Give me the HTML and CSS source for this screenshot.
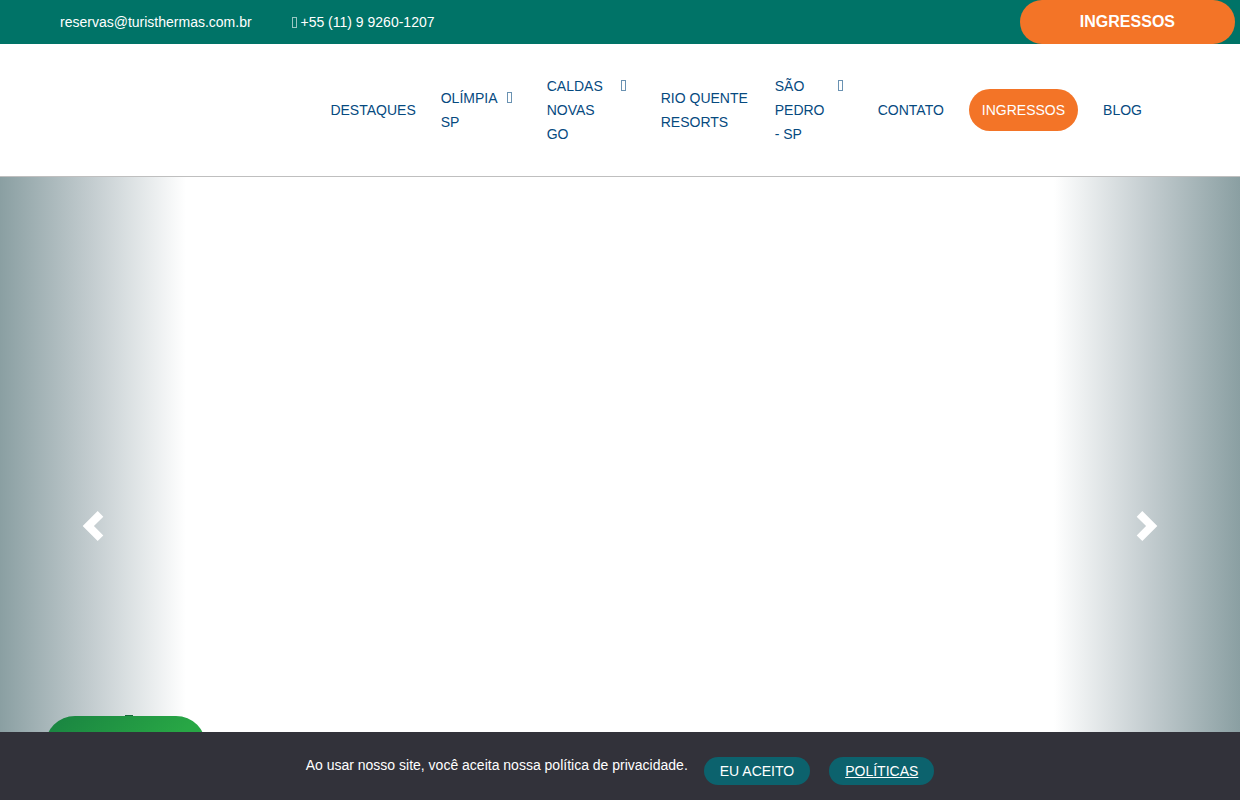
FILE: index.html
```html
<!DOCTYPE html>
<html lang="pt-BR">
<head>
<meta charset="utf-8">
<meta name="viewport" content="width=device-width, initial-scale=1">
<title>Turisthermas</title>
<link rel="stylesheet" href="styles.css">
</head>
<body>
<div class="topbar">
  <div class="topbar-contact">
    <a href="mailto:reservas@turisthermas.com.br">reservas@turisthermas.com.br</a>
    <a href="tel:+5511992601207"><span class="glyph" aria-hidden="true"></span> +55 (11) 9 9260-1207</a>
  </div>
  <a class="topbar-cta" href="#ingressos">INGRESSOS</a>
</div>
<header class="header">
  <nav class="nav">
    <a class="nav-link" href="#destaques">DESTAQUES</a>
    <a class="nav-link" href="#olimpia"><span class="label-olimpia">OLÍMPIA SP</span><span class="glyph caret" aria-hidden="true"></span></a>
    <a class="nav-link" href="#caldas"><span class="label-caldas">CALDAS NOVAS GO</span><span class="glyph caret" aria-hidden="true"></span></a>
    <a class="nav-link" href="#rio"><span class="label-rio">RIO QUENTE RESORTS</span></a>
    <a class="nav-link" href="#sao-pedro"><span class="label-pedro">SÃO PEDRO - SP</span><span class="glyph caret" aria-hidden="true"></span></a>
    <a class="nav-link" href="#contato">CONTATO</a>
    <a class="nav-link nav-pill" href="#ingressos">INGRESSOS</a>
    <a class="nav-link" href="#blog">BLOG</a>
  </nav>
</header>
<main class="carousel">
  <button class="control control-prev" type="button" aria-label="Anterior">
    <svg width="30" height="30" viewBox="0 0 8 8" fill="#fff"><path d="M5.25 0l-4 4 4 4 1.5-1.5L4.25 4l2.5-2.5L5.25 0z"/></svg>
  </button>
  <button class="control control-next" type="button" aria-label="Próximo">
    <svg width="30" height="30" viewBox="0 0 8 8" fill="#fff"><path d="M2.75 0l-1.5 1.5L3.75 4l-2.5 2.5L2.75 8l4-4-4-4z"/></svg>
  </button>
</main>
<a class="chat" href="#whatsapp" aria-label="WhatsApp"><span class="chat-icon" aria-hidden="true"></span></a>
<div class="cookies">
  <p class="cookies-text">Ao usar nosso site, você aceita nossa política de privacidade.</p>
  <button class="cookies-button" type="button">EU ACEITO</button>
  <a class="cookies-button cookies-link" href="#politicas">POLÍTICAS</a>
</div>
</body>
</html>
```
FILE: styles.css
```css
* { box-sizing: border-box; }
body {
  margin: 0;
  background: #fff;
  font-family: "Liberation Sans", Arial, sans-serif;
  font-size: 14px;
  line-height: 24px;
  color: #fff;
}
a { color: inherit; text-decoration: none; }

.glyph {
  display: inline-block;
  width: 5px;
  height: 11px;
  border: 1px solid;
  opacity: 0.6;
  vertical-align: -1px;
}

.topbar {
  display: flex;
  justify-content: space-between;
  height: 44px;
  padding: 0 5px 0 60px;
  background: #007367;
}
.topbar-contact { display: flex; align-items: center; gap: 40px; }
.topbar-cta {
  padding: 10px 60px;
  border-radius: 25px;
  background: #f37427;
  font-size: 16px;
  font-weight: bold;
}

.header {
  display: flex;
  justify-content: flex-end;
  padding: 30px 98px 30px 60px;
  border-bottom: 1px solid #bfbfbf;
  color: #064a7f;
}
.nav { display: flex; align-items: center; gap: 25px; }
.nav-link { display: flex; align-items: flex-start; }
.label-olimpia { width: 56px; }
.label-caldas { width: 64px; }
.label-rio { width: 89px; }
.label-pedro { width: 53px; }
.caret { margin: 6px 10px 0; }
.nav-pill {
  padding: 9px 13px;
  border-radius: 21px;
  background: #f37427;
  color: #fff;
}

.carousel {
  display: flex;
  justify-content: space-between;
  aspect-ratio: 16 / 9;
}
.control {
  display: flex;
  align-items: center;
  justify-content: center;
  width: 15%;
  padding: 0;
  border: 0;
}
.control-prev { background: linear-gradient(to right, #8a9fa2, #c4cdd0 50%, #fff); }
.control-next { background: linear-gradient(to left, #8a9fa2, #c4cdd0 50%, #fff); }

.chat {
  position: fixed;
  left: 45px;
  bottom: 24px;
  width: 161px;
  height: 60px;
  border-radius: 30px;
  background: linear-gradient(135deg, #198241, #28a745 70%);
}
.chat-icon {
  position: absolute;
  top: -1px;
  left: 80px;
  width: 8px;
  height: 1px;
  background: #17683a;
}

.cookies {
  position: fixed;
  left: 0;
  right: 0;
  bottom: 0;
  display: flex;
  justify-content: center;
  align-items: flex-start;
  padding: 25px 0 15px;
  background: #32323a;
}
.cookies-text { margin: 0 16px 0 0; line-height: 16px; }
.cookies-button {
  padding: 2px 16px;
  border: 0;
  border-radius: 14px;
  background: #0c626d;
  font: inherit;
  color: #fff;
}
.cookies-link { margin-left: 19px; text-decoration: underline; }
```
